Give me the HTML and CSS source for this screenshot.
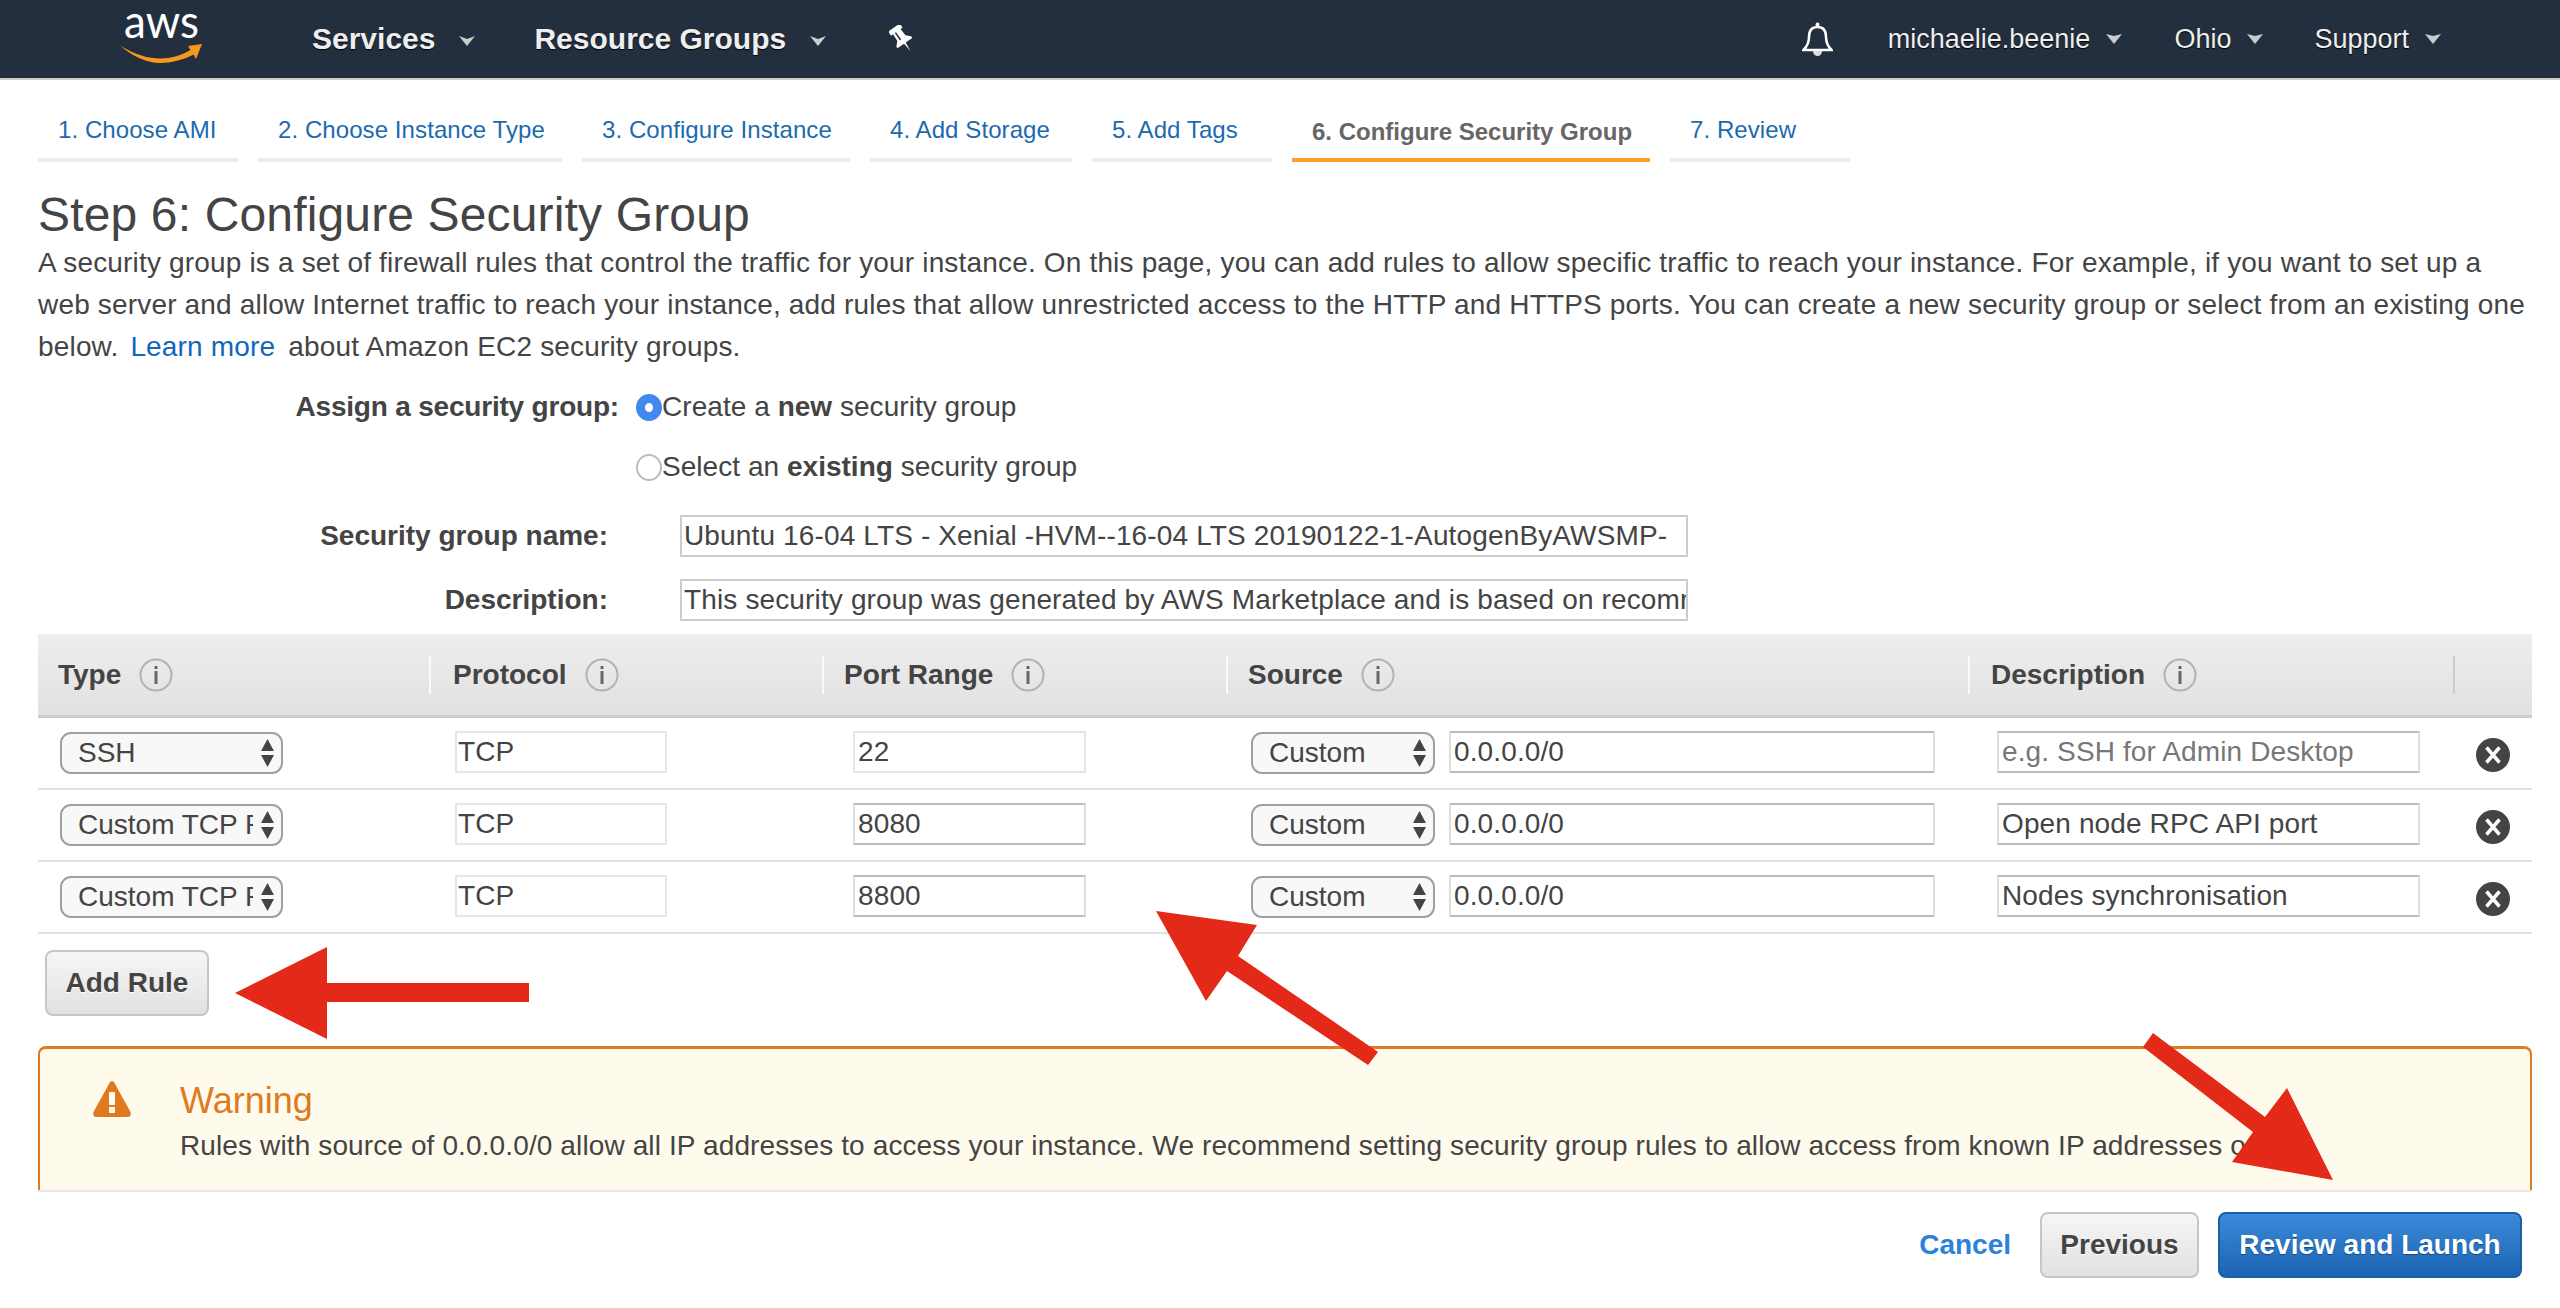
FILE: index.html
```html
<!DOCTYPE html>
<html lang="en">
<head>
  <meta charset="UTF-8">
  <title>Step 6: Configure Security Group</title>
  <link rel="stylesheet" href="styles.css">
</head>
<body>
  <div class="topbar">
    <svg class="logo" viewBox="118 0 86 78" width="86" height="78">
      <text class="logo-text" x="124" y="38" textLength="75" lengthAdjust="spacingAndGlyphs">aws</text>
      <path fill="#f7981d" d="M120 45.500 C135 55 149 58.500 160 58.500 C171 58.500 182 55 190.500 50 L188 46 L202 44 L196 59 L193.500 54.500 C183 60 171 63 160 63 C147 63 132 56 120 45.500 Z"/>
    </svg>
    <a class="nav-main nav-services">Services</a>
    <svg class="caret" viewBox="0 0 16 10" width="16" height="10"><path d="M0 0 L8 3 L16 0 L8 10 Z"/></svg>
    <a class="nav-main nav-groups">Resource Groups</a>
    <svg class="caret" viewBox="0 0 16 10" width="16" height="10"><path d="M0 0 L8 3 L16 0 L8 10 Z"/></svg>
    <svg class="pin" viewBox="-13 -14 26 28" width="26" height="28">
      <g transform="rotate(-35)">
        <path fill="#fff" d="M-7 -14 L7 -14 L7 -9 L4.500 -9 L5 -1 L9 3 L9 5 L1 5 L0 15 L-1 5 L-9 5 L-9 3 L-5 -1 L-4.500 -9 L-7 -9 Z"/>
        <rect x="-2.500" y="-9" width="1.500" height="9" fill="#232f3e"/>
      </g>
    </svg>

    <div class="nav-right">
      <svg class="bell" viewBox="0 0 31 34" width="31" height="34">
        <path fill="none" stroke="#fff" stroke-width="2.500" d="M15.500 5 C9 5 7 9 7 15 C7 20 5.500 24 1.500 28 L29.500 28 C25.500 24 24 20 24 15 C24 9 22 5 15.500 5 Z"/>
        <circle cx="15.500" cy="2.500" r="2" fill="#fff"/>
        <path fill="#ddd" d="M11 29 L20 29 C20 33 17 34 15.500 34 C14 34 11 33 11 29 Z"/>
      </svg>
      <a class="nav-item nav-user">michaelie.beenie</a>
      <svg class="caret small" viewBox="0 0 16 10" width="16" height="10"><path d="M0 0 L8 2 L16 0 L8 10 Z"/></svg>
      <a class="nav-item nav-region">Ohio</a>
      <svg class="caret small" viewBox="0 0 16 10" width="16" height="10"><path d="M0 0 L8 2 L16 0 L8 10 Z"/></svg>
      <a class="nav-item nav-support">Support</a>
      <svg class="caret small" viewBox="0 0 16 10" width="16" height="10"><path d="M0 0 L8 2 L16 0 L8 10 Z"/></svg>
    </div>
  </div>

  <div class="page">
    <div class="tabs">
      <a class="tab">1. Choose AMI</a>
      <a class="tab">2. Choose Instance Type</a>
      <a class="tab">3. Configure Instance</a>
      <a class="tab">4. Add Storage</a>
      <a class="tab">5. Add Tags</a>
      <a class="tab active">6. Configure Security Group</a>
      <a class="tab">7. Review</a>
    </div>

    <h1>Step 6: Configure Security Group</h1>
    <p class="intro">A security group is a set of firewall rules that control the traffic for your instance. On this page, you can add rules to allow specific traffic to reach your instance. For example, if you want to set up a web server and allow Internet traffic to reach your instance, add rules that allow unrestricted access to the HTTP and HTTPS ports. You can create a new security group or select from an existing one below. <a class="link">Learn more</a> about Amazon EC2 security groups.</p>

    <div class="assign-row first">
      <span class="assign-label">Assign a security group:</span>
      <span class="radio checked"></span>
      <span>Create a <b>new</b> security group</span>
    </div>
    <div class="assign-row">
      <span class="assign-label"></span>
      <span class="radio"></span>
      <span>Select an <b>existing</b> security group</span>
    </div>

    <div class="name-row first">
      <span class="name-label">Security group name:</span>
      <div class="field group-field">Ubuntu 16-04 LTS - Xenial -HVM--16-04 LTS 20190122-1-AutogenByAWSMP-</div>
    </div>
    <div class="name-row">
      <span class="name-label">Description:</span>
      <div class="field group-field">This security group was generated by AWS Marketplace and is based on recommended settings</div>
    </div>

    <div class="rules-head rule-grid">
      <div class="head-cell type">Type
        <svg class="info" viewBox="0 0 34 34" width="34" height="34"><circle cx="17" cy="17" r="15.500" fill="none" stroke="#b3b3b3" stroke-width="2"/><rect x="15.500" y="8" width="3" height="3" fill="#666"/><rect x="15.500" y="13" width="3" height="13" fill="#666"/></svg>
      </div>
      <div class="head-cell protocol">Protocol
        <svg class="info" viewBox="0 0 34 34" width="34" height="34"><circle cx="17" cy="17" r="15.500" fill="none" stroke="#b3b3b3" stroke-width="2"/><rect x="15.500" y="8" width="3" height="3" fill="#666"/><rect x="15.500" y="13" width="3" height="13" fill="#666"/></svg>
      </div>
      <div class="head-cell port">Port Range
        <svg class="info" viewBox="0 0 34 34" width="34" height="34"><circle cx="17" cy="17" r="15.500" fill="none" stroke="#b3b3b3" stroke-width="2"/><rect x="15.500" y="8" width="3" height="3" fill="#666"/><rect x="15.500" y="13" width="3" height="13" fill="#666"/></svg>
      </div>
      <div class="head-cell source">Source
        <svg class="info" viewBox="0 0 34 34" width="34" height="34"><circle cx="17" cy="17" r="15.500" fill="none" stroke="#b3b3b3" stroke-width="2"/><rect x="15.500" y="8" width="3" height="3" fill="#666"/><rect x="15.500" y="13" width="3" height="13" fill="#666"/></svg>
      </div>
      <div class="head-cell desc">Description
        <svg class="info" viewBox="0 0 34 34" width="34" height="34"><circle cx="17" cy="17" r="15.500" fill="none" stroke="#b3b3b3" stroke-width="2"/><rect x="15.500" y="8" width="3" height="3" fill="#666"/><rect x="15.500" y="13" width="3" height="13" fill="#666"/></svg>
      </div>
      <div class="head-cell action"></div>
    </div>

    <div class="rule rule-grid">
      <div class="cell type">
        <div class="select type-select"><span class="select-text">SSH</span><svg class="updown" viewBox="0 0 13 28" width="13" height="28"><path d="M6.500 0 L13 12 L0 12 Z M0 16 L13 16 L6.500 28 Z"/></svg></div>
      </div>
      <div class="cell protocol"><div class="field locked protocol-field">TCP</div></div>
      <div class="cell port"><div class="field locked port-field">22</div></div>
      <div class="cell source">
        <div class="select source-select"><span class="select-text">Custom</span><svg class="updown" viewBox="0 0 13 28" width="13" height="28"><path d="M6.500 0 L13 12 L0 12 Z M0 16 L13 16 L6.500 28 Z"/></svg></div>
        <div class="field source-field">0.0.0.0/0</div>
      </div>
      <div class="cell desc"><div class="field desc-field placeholder">e.g. SSH for Admin Desktop</div></div>
      <div class="cell action"><svg class="remove" viewBox="0 0 34 34" width="34" height="34"><circle cx="17" cy="17" r="17" fill="#444"/><path d="M10.500 9.500 L23.500 24.500 M23.500 9.500 L10.500 24.500" stroke="#fff" stroke-width="3.500"/></svg></div>
    </div>

    <div class="rule rule-grid">
      <div class="cell type">
        <div class="select type-select"><span class="select-text">Custom TCP Rule</span><svg class="updown" viewBox="0 0 13 28" width="13" height="28"><path d="M6.500 0 L13 12 L0 12 Z M0 16 L13 16 L6.500 28 Z"/></svg></div>
      </div>
      <div class="cell protocol"><div class="field locked protocol-field">TCP</div></div>
      <div class="cell port"><div class="field port-field">8080</div></div>
      <div class="cell source">
        <div class="select source-select"><span class="select-text">Custom</span><svg class="updown" viewBox="0 0 13 28" width="13" height="28"><path d="M6.500 0 L13 12 L0 12 Z M0 16 L13 16 L6.500 28 Z"/></svg></div>
        <div class="field source-field">0.0.0.0/0</div>
      </div>
      <div class="cell desc"><div class="field desc-field">Open node RPC API port</div></div>
      <div class="cell action"><svg class="remove" viewBox="0 0 34 34" width="34" height="34"><circle cx="17" cy="17" r="17" fill="#444"/><path d="M10.500 9.500 L23.500 24.500 M23.500 9.500 L10.500 24.500" stroke="#fff" stroke-width="3.500"/></svg></div>
    </div>

    <div class="rule rule-grid">
      <div class="cell type">
        <div class="select type-select"><span class="select-text">Custom TCP Rule</span><svg class="updown" viewBox="0 0 13 28" width="13" height="28"><path d="M6.500 0 L13 12 L0 12 Z M0 16 L13 16 L6.500 28 Z"/></svg></div>
      </div>
      <div class="cell protocol"><div class="field locked protocol-field">TCP</div></div>
      <div class="cell port"><div class="field port-field">8800</div></div>
      <div class="cell source">
        <div class="select source-select"><span class="select-text">Custom</span><svg class="updown" viewBox="0 0 13 28" width="13" height="28"><path d="M6.500 0 L13 12 L0 12 Z M0 16 L13 16 L6.500 28 Z"/></svg></div>
        <div class="field source-field">0.0.0.0/0</div>
      </div>
      <div class="cell desc"><div class="field desc-field">Nodes synchronisation</div></div>
      <div class="cell action"><svg class="remove" viewBox="0 0 34 34" width="34" height="34"><circle cx="17" cy="17" r="17" fill="#444"/><path d="M10.500 9.500 L23.500 24.500 M23.500 9.500 L10.500 24.500" stroke="#fff" stroke-width="3.500"/></svg></div>
    </div>

    <button class="btn add-rule">Add Rule</button>

    <div class="warning">
      <svg class="warn-icon" viewBox="0 0 38 36" width="38" height="36">
        <path fill="#e07a22" d="M19 0 C20 0 21 1 21.500 2 L37 30 C38.500 33 38 36 34.500 36 L3.500 36 C0 36 -0.500 33 1 30 L16.500 2 C17 1 18 0 19 0 Z"/>
        <rect x="16" y="11" width="6" height="13" fill="#fffbec"/>
        <rect x="16" y="26" width="6" height="6" fill="#fffbec"/>
      </svg>
      <div class="warn-body">
        <div class="warn-title">Warning</div>
        <div class="warn-text">Rules with source of 0.0.0.0/0 allow all IP addresses to access your instance. We recommend setting security group rules to allow access from known IP addresses only.</div>
      </div>
    </div>

    <div class="footer">
      <a class="cancel">Cancel</a>
      <button class="btn previous">Previous</button>
      <button class="btn primary">Review and Launch</button>
    </div>
  </div>

  <!-- red annotation arrows drawn on top of the screenshot -->
  <svg class="arrows" viewBox="0 0 2560 1308" width="2560" height="1308">
    <polygon points="235,993 327,947 327,983 529,983 529,1002 327,1002 327,1039"/>
    <polygon points="1156,911 1257,925 1238,956 1378,1052 1368,1065 1227,971 1206,1001"/>
    <polygon points="2333,1180 2287,1088 2265,1117 2153,1033 2143,1047 2253,1132 2232,1162"/>
  </svg>
</body>
</html>
```

FILE: styles.css
```css
html, body {
  margin: 0;
  height: 1308px;
  overflow: hidden;
  background: #fff;
}
body {
  position: relative;
  font-family: "Liberation Sans", Arial, sans-serif;
  font-size: 28px;
  color: #444;
}
b {
  letter-spacing: 0;
}

/* top bar */
.topbar {
  display: flex;
  align-items: center;
  height: 78px;
  background: #232f3e;
  border-bottom: 2px solid #ccc;
}
.logo {
  margin-left: 118px;
  overflow: visible;
}
.logo-text {
  font-family: Lato, sans-serif;
  font-size: 47px;
  fill: #fff;
}
.nav-main {
  font-size: 30px;
  font-weight: bold;
  color: #eee;
  text-shadow: 0 1px 1px #000;
}
.nav-services {
  margin-left: 108px;
}
.nav-groups {
  margin-left: 59px;
}
.caret {
  margin-left: 24px;
  margin-top: 4px;
}
.caret path {
  fill: #ccc;
}
.pin {
  margin-left: 63px;
}
.nav-right {
  display: flex;
  align-items: center;
  margin-left: auto;
  margin-right: 119px;
}
.nav-item {
  font-size: 27px;
  color: #eee;
  text-shadow: 0 1px 1px #000;
}
.nav-user {
  margin-left: 55px;
}
.nav-region {
  margin-left: 52px;
}
.nav-support {
  margin-left: 51px;
}
.caret.small {
  margin-left: 16px;
  margin-top: 0;
}

/* layout */
.page {
  width: 2494px;
  margin-left: 38px;
}
.tabs {
  display: grid;
  grid-template-columns: 200px 304px 268px 202px 180px 358px 180px;
  justify-content: start;
  gap: 20px;
  margin-top: 22px;
}
.tab {
  height: 56px;
  line-height: 56px;
  padding-left: 20px;
  font-size: 24px;
  letter-spacing: 0.08px;
  color: #1b6ab0;
  border-bottom: 4px solid #ececec;
}
.tab.active {
  line-height: 60px;
  font-weight: bold;
  letter-spacing: 0;
  color: #666;
  border-bottom-color: #ff9a2b;
}
h1 {
  margin: 25px 0 0;
  font-size: 48px;
  font-weight: normal;
  line-height: 55px;
  letter-spacing: 0.15px;
}
.intro {
  margin: 0;
  line-height: 42px;
  letter-spacing: 0.17px;
}
.link {
  margin: 0 5px 0 4px;
  color: #1166bb;
}

/* assign / name rows */
.assign-row {
  display: flex;
  align-items: center;
  height: 60px;
  letter-spacing: 0.05px;
}
.assign-row.first {
  margin-top: 9px;
}
.assign-label {
  width: 581px;
  margin-right: 17px;
  font-weight: bold;
  letter-spacing: -0.2px;
  text-align: right;
}
.radio {
  flex: none;
  width: 26px;
  height: 27px;
  box-sizing: border-box;
  border: 2px solid #bbb;
  border-radius: 50%;
  background: #fff;
}
.radio.checked {
  border: 9px solid #4488ee;
}
.name-row {
  display: flex;
  align-items: center;
  margin-top: 22px;
}
.name-row.first {
  margin-top: 18px;
}
.name-label {
  width: 570px;
  margin-right: 72px;
  font-weight: bold;
  text-align: right;
}
.field {
  box-sizing: border-box;
  height: 42px;
  line-height: 38px;
  padding-left: 3px;
  overflow: hidden;
  white-space: nowrap;
  letter-spacing: 0.12px;
  background: #fff;
  border: 2px solid #ddd;
  border-top-color: #bbb;
  border-bottom-color: #bbb;
  flex: none;
}
.group-field {
  width: 1008px;
  padding-left: 2px;
  letter-spacing: 0.14px;
  border-color: #ccc;
}
.rule .field {
  margin-top: -2px;
}
.field.locked {
  border-color: #e6e6e6;
}
.placeholder {
  color: #777;
}

/* rules table */
.rule-grid {
  display: grid;
  grid-template-columns: 391px 393px 404px 742px 485px 79px;
}
.rules-head {
  height: 81px;
  margin-top: 13px;
  align-items: center;
  background: linear-gradient(#eee, #e1e1e1);
  border-bottom: 3px solid #ccc;
  font-weight: bold;
}
.head-cell {
  display: flex;
  align-items: center;
  gap: 18px;
  height: 38px;
  border-left: 2px solid #fafafa;
  box-sizing: border-box;
}
.head-cell.type {
  padding-left: 20px;
  border-left: none;
}
.head-cell.protocol {
  padding-left: 22px;
}
.head-cell.port {
  padding-left: 20px;
}
.head-cell.source {
  padding-left: 20px;
}
.head-cell.desc {
  padding-left: 21px;
}
.head-cell.action {
  border-left-color: #ccc;
}
.rule {
  height: 70px;
  align-items: center;
  border-bottom: 2px solid #e1e1e1;
}
.cell {
  display: flex;
  align-items: center;
}
.cell.type {
  padding-left: 22px;
}
.cell.protocol {
  padding-left: 26px;
}
.cell.port {
  padding-left: 31px;
}
.cell.source {
  padding-left: 25px;
  gap: 14px;
}
.cell.desc {
  padding-left: 29px;
}
.cell.action {
  padding-left: 23px;
}
.select {
  position: relative;
  flex: none;
  box-sizing: border-box;
  height: 42px;
  line-height: 38px;
  padding-left: 16px;
  background: #f8f8f8;
  border: 2px solid #a0a0a0;
  border-radius: 11px;
}
.select-text {
  display: block;
  overflow: hidden;
  white-space: nowrap;
}
.type-select {
  width: 223px;
}
.type-select .select-text {
  width: 175px;
}
.source-select {
  width: 184px;
}
.updown {
  position: absolute;
  top: 5px;
  right: 7px;
  fill: #444;
}
.protocol-field {
  width: 212px;
  padding-left: 1px;
}
.port-field {
  width: 233px;
}
.source-field {
  width: 486px;
}
.desc-field {
  width: 423px;
}
.remove {
  margin-top: 3px;
}

/* buttons */
.btn {
  display: block;
  height: 66px;
  box-sizing: border-box;
  padding: 0;
  font-family: inherit;
  font-size: 28px;
  font-weight: bold;
  color: #444;
  background: linear-gradient(#f6f6f6, #e1e1e1);
  border: 2px solid #c6c6c6;
  border-radius: 8px;
  text-shadow: 0 1px 0 #fff;
}
.add-rule {
  width: 164px;
  margin: 16px 0 0 7px;
}

/* warning */
.warning {
  display: flex;
  height: 144px;
  margin-top: 30px;
  box-sizing: border-box;
  padding-left: 53px;
  overflow: hidden;
  background: #fffbec;
  border: 2px solid #dd7a22;
  border-top-width: 3px;
  border-bottom: none;
  border-radius: 8px 8px 0 0;
  box-shadow: 0 2px 0 #e8e8e8;
}
.warn-icon {
  flex: none;
  margin-top: 32px;
}
.warn-body {
  margin-left: 49px;
  margin-top: 30px;
  white-space: nowrap;
}
.warn-title {
  font-size: 36px;
  line-height: 44px;
  color: #dd7a22;
}
.warn-text {
  margin-top: 1px;
  line-height: 44px;
  letter-spacing: 0.12px;
}

/* footer */
.footer {
  display: flex;
  align-items: center;
  justify-content: flex-end;
  margin-top: 22px;
  padding-right: 10px;
}
.cancel {
  margin-right: 29px;
  font-weight: bold;
  color: #2a83d8;
}
.previous {
  width: 159px;
  margin-right: 19px;
}
.primary {
  width: 304px;
  color: #fff;
  background: linear-gradient(#3b8ad9, #1c64b3);
  border-color: #1a5fa8;
  text-shadow: 0 1px 1px #134a85;
}

/* annotation layer */
.arrows {
  position: absolute;
  top: 0;
  left: 0;
  pointer-events: none;
}
.arrows polygon {
  fill: #e32918;
}
```
